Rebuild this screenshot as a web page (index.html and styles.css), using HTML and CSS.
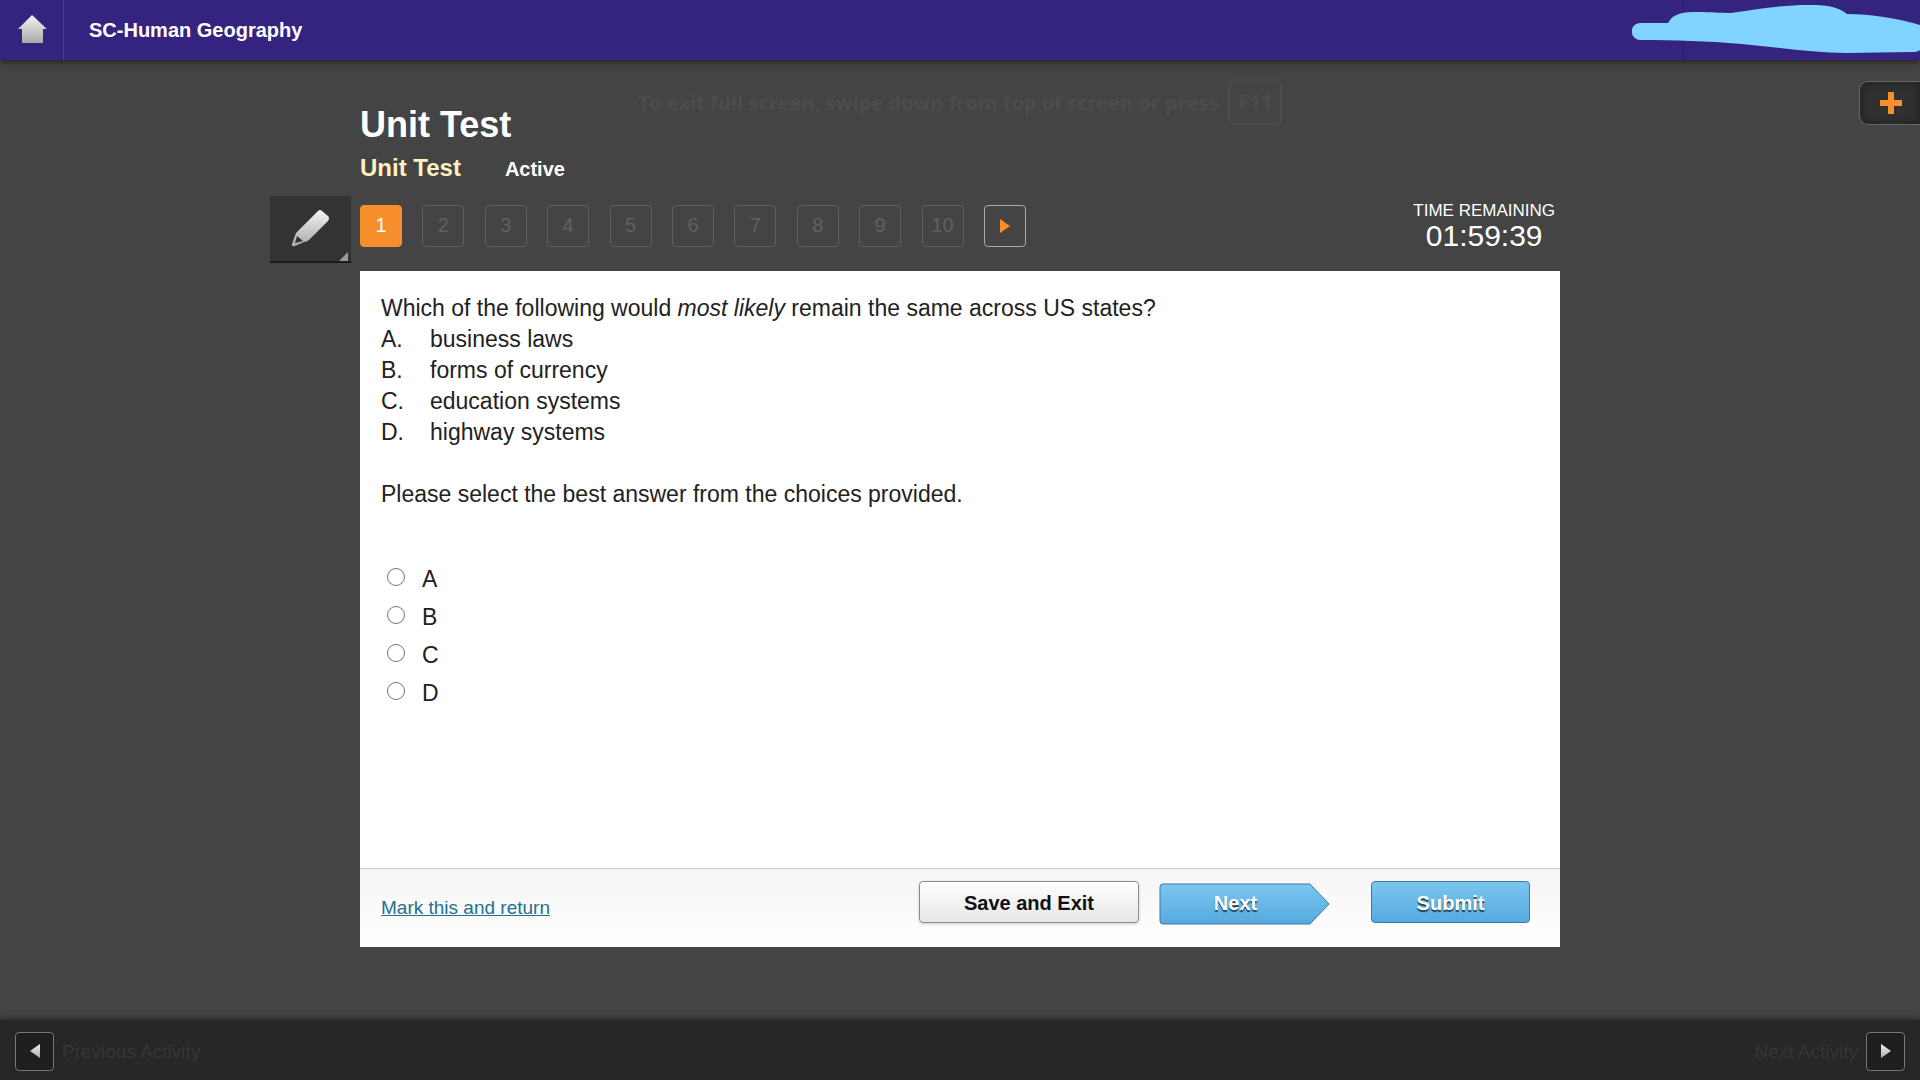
FILE: index.html
```html
<!DOCTYPE html>
<html lang="en">
<head>
	<meta charset="utf-8">
	<title>SC-Human Geography</title>
	<link rel="stylesheet" href="styles.css">
</head>
<body>
	<header class="topbar">
		<a class="home" href="#" aria-label="Home">
			<svg width="30" height="30" viewBox="0 0 30 30">
				<defs>
					<linearGradient id="silver" x1="0" y1="0" x2="0" y2="1">
						<stop offset="0" stop-color="#f4f4f4"/>
						<stop offset="1" stop-color="#a9a9a9"/>
					</linearGradient>
				</defs>
				<path d="M15 0 L30 14 H26 V28 H5 V14 H1 Z" fill="url(#silver)"/>
			</svg>
		</a>
		<span class="course">SC-Human Geography</span>
		<svg class="scribble" width="288" height="60" viewBox="0 0 288 60">
			<path d="M51 0 V60" stroke="#2a1c6c"/>
			<path d="M8 23 H36 C41 13 52 12 66 12 C78 12 90 13 99 13 C124 9 150 5 177 5 C194 5 205 6 215 14 C240 14 264 18 288 25 V50 Q286 52 280 52 L215 53 C180 53 144 47 110 44 C74 41 44 40 8 40 C-3 39 -3 24 8 23 Z" fill="#80d4ff"/>
		</svg>
	</header>

	<div class="fs-hint">
		<span>To exit full screen, swipe down from top of screen or press</span>
		<kbd>F11</kbd>
	</div>
	<button class="expand" type="button" aria-label="Expand">
		<svg width="22" height="22" viewBox="0 0 22 22"><path d="M8 0 H14 V8 H22 V14 H14 V22 H8 V14 H0 V8 H8 Z" fill="#f78f2c"/></svg>
	</button>

	<main class="activity">
		<h1>Unit Test</h1>
		<div class="status">
			<h2>Unit Test</h2>
			<span>Active</span>
		</div>
		<div class="tools">
			<button class="pencil" type="button" aria-label="Highlighter">
				<svg width="81" height="65" viewBox="0 0 81 65">
					<path d="M48 15 Q50 13 52 15 L58 20 Q60 22 58 25 L39 44 Q37 46 34 46 L25 50 Q21 51 22 48 L26 37 Z" fill="url(#silver)"/>
					<path d="M27 40 L33 45 L25 47 Z" fill="#333"/>
					<path d="M78 56 V65 H69 Z" fill="#999"/>
				</svg>
			</button>
			<nav class="pages">
				<button class="page current" type="button">1</button>
				<button class="page" type="button">2</button>
				<button class="page" type="button">3</button>
				<button class="page" type="button">4</button>
				<button class="page" type="button">5</button>
				<button class="page" type="button">6</button>
				<button class="page" type="button">7</button>
				<button class="page" type="button">8</button>
				<button class="page" type="button">9</button>
				<button class="page" type="button">10</button>
				<button class="page forward" type="button" aria-label="Next question">
					<svg width="10" height="14" viewBox="0 0 10 14"><path d="M0 0 L10 7 L0 14 Z" fill="#f78f2c"/></svg>
				</button>
			</nav>
			<div class="timer">
				<div class="timer-label">TIME REMAINING</div>
				<div class="timer-value">01:59:39</div>
			</div>
		</div>

		<form class="panel">
			<div class="question">
				<p>Which of the following would <em>most likely</em> remain the same across US states?</p>
				<ol class="options">
					<li><span>A.</span>business laws</li>
					<li><span>B.</span>forms of currency</li>
					<li><span>C.</span>education systems</li>
					<li><span>D.</span>highway systems</li>
				</ol>
				<p>Please select the best answer from the choices provided.</p>
				<div class="answers">
					<label><input type="radio" name="answer" value="A">A</label>
					<label><input type="radio" name="answer" value="B">B</label>
					<label><input type="radio" name="answer" value="C">C</label>
					<label><input type="radio" name="answer" value="D">D</label>
				</div>
			</div>
			<div class="actions">
				<a href="#">Mark this and return</a>
				<button class="btn save" type="button">Save and Exit</button>
				<button class="next" type="button">
					<svg width="171" height="42" viewBox="0 0 171 42">
						<defs>
							<linearGradient id="blue" x1="0" y1="0" x2="0" y2="1">
								<stop offset="0" stop-color="#7cc6f0"/>
								<stop offset="1" stop-color="#55aadf"/>
							</linearGradient>
						</defs>
						<path d="M4 1 H151 L170 21 L151 41 H4 Q1 41 1 38 V4 Q1 1 4 1 Z" fill="url(#blue)" stroke="#3f789e"/>
					</svg>
					<span>Next</span>
				</button>
				<button class="btn submit" type="submit">Submit</button>
			</div>
		</form>
	</main>

	<footer class="bottombar">
		<div class="step">
			<button type="button" aria-label="Previous Activity">
				<svg width="10" height="14" viewBox="0 0 10 14"><path d="M10 0 V14 L0 7 Z" fill="url(#silver)"/></svg>
			</button>
			<span>Previous Activity</span>
		</div>
		<div class="step">
			<span>Next Activity</span>
			<button type="button" aria-label="Next Activity">
				<svg width="10" height="14" viewBox="0 0 10 14"><path d="M0 0 V14 L10 7 Z" fill="url(#silver)"/></svg>
			</button>
		</div>
	</footer>
</body>
</html>
```
FILE: styles.css
```css
*{
	box-sizing: border-box;
}
body{
	margin: 0;
	min-height: 100vh;
	display: flex;
	flex-direction: column;
	background-color: #444;
	color: #222;
	font-family: Arial, "Liberation Sans", sans-serif;
}
button{
	padding: 0;
	font-family: inherit;
	cursor: pointer;
}
svg{
	display: block;
}
h1, h2, p, ol{
	margin: 0;
	padding: 0;
}

/* top bar */
.topbar{
	display: flex;
	align-items: center;
	height: 60px;
	background-color: #35247f;
	box-shadow: 0 2px 6px #222;
}
.home{
	display: flex;
	align-items: center;
	justify-content: center;
	width: 64px;
	height: 60px;
	border-right: 1px solid #483a8c;
}
.course{
	margin-left: 25px;
	color: #fff;
	font-size: 20px;
	font-weight: bold;
}
.scribble{
	margin-left: auto;
}

/* things lying over the page */
.fs-hint{
	position: absolute;
	top: 79px;
	left: 0;
	right: 0;
	display: flex;
	align-items: center;
	justify-content: center;
	gap: 10px;
	color: #4c4c4c;
	font-family: "Open Sans", sans-serif;
	font-size: 20px;
	font-weight: bold;
}
.fs-hint kbd{
	padding: 0 8px;
	border: 2px solid #4b4b4b;
	border-radius: 6px;
	font-family: inherit;
	line-height: 42px;
}
.expand{
	position: absolute;
	top: 81px;
	right: 0;
	width: 61px;
	height: 44px;
	padding-left: 20px;
	border: 1px solid #666;
	border-right: 0;
	border-radius: 9px 0 0 9px;
	background-color: #303030;
	box-shadow: inset 0 0 8px #1c1c1c;
}

/* activity */
.activity{
	flex: 1;
	width: 1200px;
	max-width: 100%;
	margin: 0 auto;
	padding-top: 44px;
}
h1{
	color: #fff;
	font-size: 36px;
	line-height: 42px;
}
.status{
	display: flex;
	align-items: baseline;
	gap: 44px;
	margin-top: 7px;
	color: #fff;
	font-size: 20px;
	font-weight: bold;
	line-height: 30px;
}
h2{
	color: #fff0c0;
	font-size: 24px;
}
.tools{
	display: flex;
	align-items: center;
	height: 67px;
	margin: 12px 0 8px -90px;
}
.pencil{
	width: 81px;
	height: 67px;
	margin-right: 9px;
	border: 0;
	border-bottom: 2px solid #1c1c1c;
	background-color: #333;
}
.pages{
	display: flex;
	justify-content: space-between;
	width: 666px;
	margin-bottom: 7px;
}
.page{
	display: flex;
	align-items: center;
	justify-content: center;
	width: 42px;
	height: 42px;
	padding-bottom: 2px;
	border: 1px solid #606060;
	border-radius: 4px;
	background: none;
	color: #606060;
	font-size: 20px;
}
.page.current{
	border-color: #f78f2c;
	background-color: #f78f2c;
	color: #fff;
}
.page.forward{
	padding-bottom: 0;
	border-color: #aaa;
}
.timer{
	margin-left: auto;
	margin-right: 5px;
	margin-bottom: 7px;
	color: #fff;
	text-align: center;
}
.timer-label{
	font-size: 17px;
	line-height: 20px;
}
.timer-value{
	font-size: 30px;
	line-height: 30px;
}

/* question panel */
.panel{
	background-color: #fff;
}
.question{
	min-height: 597px;
	padding: 22px 21px;
	font-size: 23px;
	line-height: 31px;
}
.options{
	margin-bottom: 31px;
	list-style: none;
}
.options li{
	display: flex;
}
.options span{
	width: 49px;
}
.answers{
	display: flex;
	flex-direction: column;
	align-items: flex-start;
	gap: 7px;
	margin-top: 54px;
}
.answers label{
	display: flex;
	align-items: center;
}
.answers input{
	width: 18px;
	height: 18px;
	margin: 0 17px 5px 6px;
}
.actions{
	display: flex;
	align-items: center;
	height: 79px;
	padding: 0 30px 12px 21px;
	border-top: 1px solid #c8c8c8;
	background: linear-gradient(#f5f5f5, #fff);
}
.actions a{
	margin-right: auto;
	padding-top: 12px;
	color: #24708f;
	font-size: 19px;
}
.btn, .next{
	height: 42px;
	font-size: 20px;
	font-weight: bold;
}
.btn{
	padding-top: 2px;
	border: 1px solid #8c8c8c;
	border-radius: 4px;
}
.save{
	width: 220px;
	background: linear-gradient(#fff, #e6e6e6);
	box-shadow: 0 1px 3px #ccc;
	color: #111;
}
.next{
	display: grid;
	align-items: center;
	width: 171px;
	margin: 3px 41px 0 20px;
	border: 0;
	background: none;
}
.next svg, .next span{
	grid-area: 1 / 1;
}
.next span{
	padding-right: 18px;
}
.submit{
	width: 159px;
	border-color: #3f789e;
	background: linear-gradient(#7cc6f0, #55aadf);
}
.next, .submit{
	color: #fff;
	text-shadow: 0 2px 1px #245;
}

/* bottom bar */
.bottombar{
	display: flex;
	align-items: center;
	justify-content: space-between;
	height: 60px;
	padding: 2px 15px 0;
	background-color: #272727;
	box-shadow: 0 -2px 6px #2c2c2c;
}
.step{
	display: flex;
	align-items: center;
	gap: 8px;
	color: #363636;
	font-size: 19px;
}
.step span{
	padding-top: 2px;
}
.step button{
	display: flex;
	align-items: center;
	justify-content: center;
	width: 39px;
	height: 39px;
	border: 1px solid #777;
	border-radius: 4px;
	background-color: #1f1f1f;
}
```
